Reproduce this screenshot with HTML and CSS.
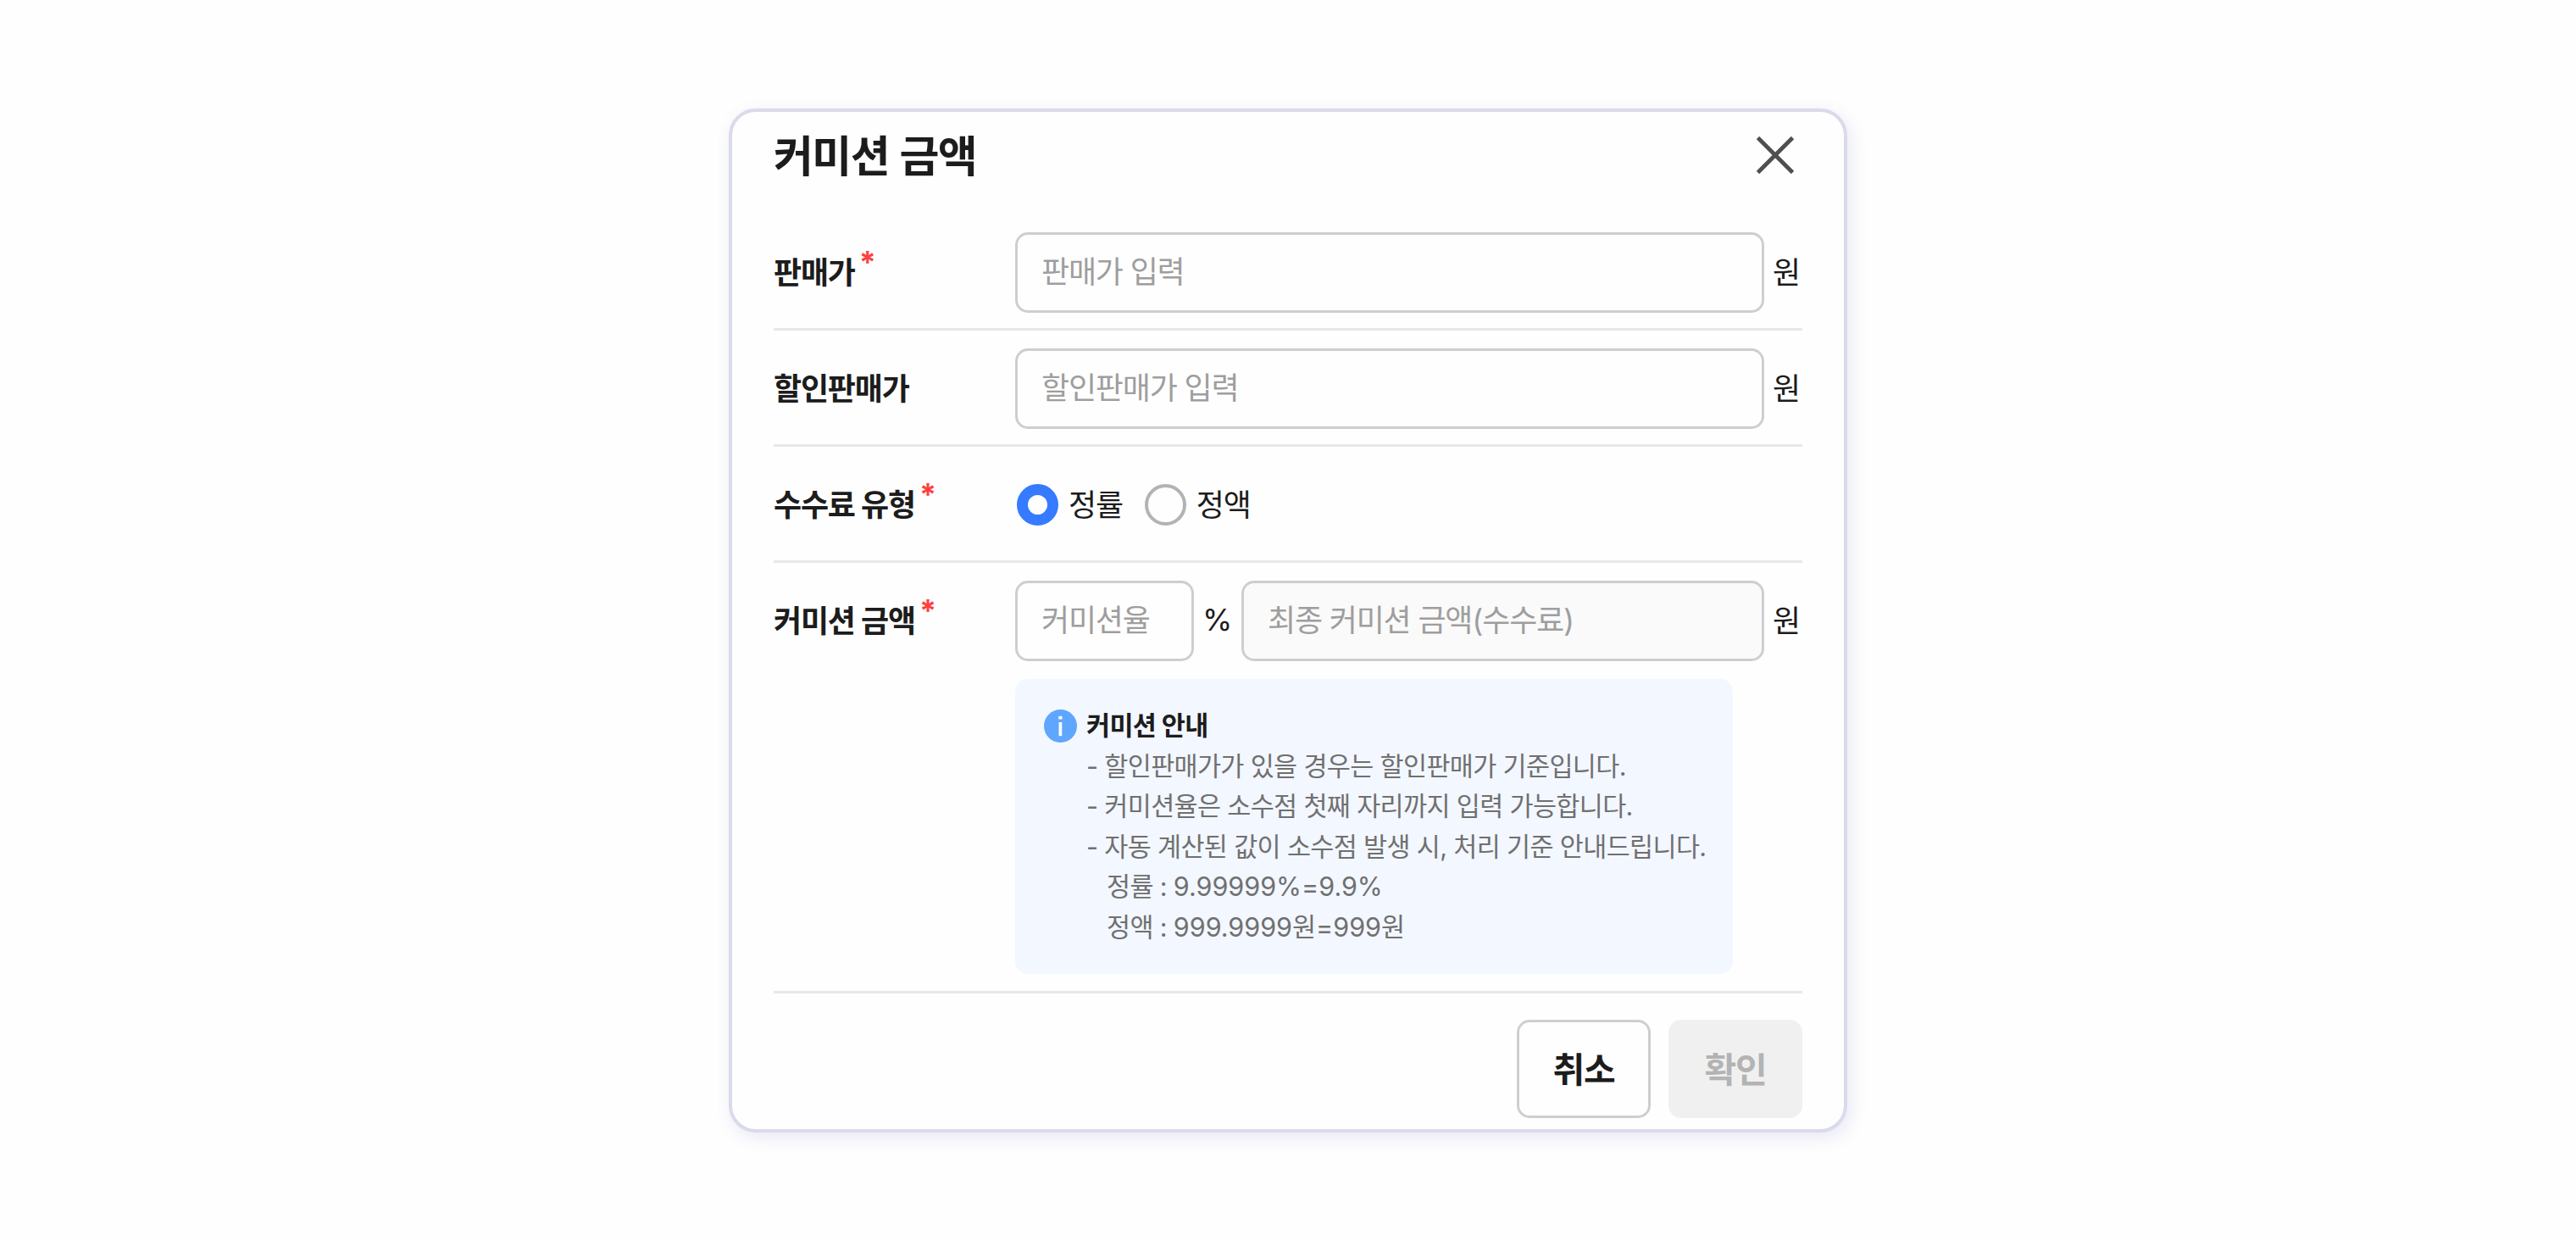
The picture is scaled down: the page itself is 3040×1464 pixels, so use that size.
FILE: index.html
```html
<!DOCTYPE html>
<html lang="ko">
<head>
    <meta charset="UTF-8">
    <meta name="viewport" content="width=device-width, initial-scale=1.0">
    <title>커미션 금액</title>
    <link rel="stylesheet" href="styles.css">
</head>
<body>
    <div class="modal">
        <div class="modal-header">
            <h2 class="modal-title">커미션 금액</h2>
            <button class="close-btn" title="닫기">
                <svg xmlns="http://www.w3.org/2000/svg" viewBox="0 0 48 48" fill="none" stroke="currentColor" stroke-width="4.8">
                    <path d="M3.5 3.5L44.5 44.5"></path>
                    <path d="M44.5 3.5L3.5 44.5"></path>
                </svg>
            </button>
        </div>

        <div class="form-row">
            <div class="label">판매가<span class="required">*</span></div>
            <div class="field">
                <input class="input" type="text" placeholder="판매가 입력">
                <span class="unit">원</span>
            </div>
        </div>

        <div class="form-row">
            <div class="label">할인판매가</div>
            <div class="field">
                <input class="input" type="text" placeholder="할인판매가 입력">
                <span class="unit">원</span>
            </div>
        </div>

        <div class="form-row">
            <div class="label">수수료 유형<span class="required">*</span></div>
            <div class="field radios">
                <label class="radio"><input type="radio" name="feeType" checked><span>정률</span></label>
                <label class="radio"><input type="radio" name="feeType"><span>정액</span></label>
            </div>
        </div>

        <div class="form-row last">
            <div class="label">커미션 금액<span class="required">*</span></div>
            <div class="field-group">
                <div class="field">
                    <input class="input rate" type="text" placeholder="커미션율">
                    <span class="percent">%</span>
                    <input class="input" type="text" placeholder="최종 커미션 금액(수수료)" disabled>
                    <span class="unit">원</span>
                </div>
                <div class="info-box">
                    <svg class="info-icon" xmlns="http://www.w3.org/2000/svg" viewBox="0 0 40 40">
                        <circle cx="20" cy="20" r="20" fill="#5ea6ff"></circle>
                        <rect x="17.8" y="8" width="4.2" height="3.8" fill="#fff"></rect>
                        <rect x="18" y="15.4" width="3.8" height="16.6" fill="#fff"></rect>
                    </svg>
                    <div class="info-text">
                        <p class="info-title">커미션 안내</p>
                        <p>- 할인판매가가 있을 경우는 할인판매가 기준입니다.</p>
                        <p>- 커미션율은 소수점 첫째 자리까지 입력 가능합니다.</p>
                        <p>- 자동 계산된 값이 소수점 발생 시, 처리 기준 안내드립니다.</p>
                        <p class="indent">정률 : <span class="num">9.99999%=9.9%</span></p>
                        <p class="indent">정액 : <span class="num">999.9999원=999원</span></p>
                    </div>
                </div>
            </div>
        </div>

        <div class="modal-footer">
            <button class="btn">취소</button>
            <button class="btn confirm" disabled>확인</button>
        </div>
    </div>
</body>
</html>
```
FILE: styles.css
```css
:root {
    --text-color: #1c1c1c;
    --sub-color: #707070;
    --placeholder-color: #9e9e9e;
    --border-color: #cecece;
    --line-color: #e7e7e7;
    --accent-color: #367bff;
    --required-color: #ff4040;
    --font-main: 'Inter', 'Noto Sans CJK KR', sans-serif;
}

* {
    margin: 0;
    padding: 0;
    box-sizing: border-box;
}

body {
    background-color: #fefefe;
    color: var(--text-color);
    font-family: var(--font-main);
    font-size: 36px;
    letter-spacing: -1.2px;
    height: 100vh;
    display: flex;
    justify-content: center;
    align-items: center;
}

button,
input {
    font-family: inherit;
    letter-spacing: inherit;
    color: inherit;
}

.modal {
    width: 1320px;
    height: 1208px;
    padding: 0 49px;
    border: 4px solid #d9daec;
    border-radius: 32px;
    background-color: #fefefe;
    box-shadow: 4px 6px 20px rgba(100, 90, 190, 0.14);
}

.modal-header {
    height: 121px;
    padding-top: 19px;
    display: flex;
    justify-content: space-between;
    align-items: flex-start;
}

.modal-title {
    font-size: 51px;
    line-height: 68px;
    font-weight: 700;
    letter-spacing: -1.6px;
    word-spacing: 2px;
}

.close-btn {
    width: 48px;
    height: 48px;
    margin: 8px 8px 0 0;
    border: none;
    background: none;
    color: #4f4f4f;
}

.close-btn svg {
    display: block;
    width: 100%;
    height: 100%;
}

.form-row {
    height: 137px;
    padding-top: 21px;
    border-bottom: 3px solid var(--line-color);
    display: flex;
}

.form-row.last {
    height: 508px;
}

.label {
    flex: none;
    width: 285px;
    height: 95px;
    padding-bottom: 5px;
    display: flex;
    align-items: center;
    font-weight: 700;
}

.required {
    margin: -20px 0 0 5px;
    font-weight: 700;
    color: var(--required-color);
}

.field {
    flex: 1;
    height: 95px;
    display: flex;
    align-items: center;
}

.field-group {
    flex: 1;
    min-width: 0;
}

.input {
    flex: 1;
    min-width: 0;
    height: 95px;
    padding: 0 28px 2px;
    border: 3px solid var(--border-color);
    border-radius: 15px;
    background-color: #fefefe;
    font-size: 36px;
}

.input::placeholder {
    color: var(--placeholder-color);
}

.input:disabled {
    background-color: #fafafa;
}

.input.rate {
    flex: 0 0 211px;
}

.unit {
    flex: none;
    width: 45px;
    padding: 0 0 5px 10px;
}

.percent {
    flex: none;
    width: 56px;
    padding: 0 0 4px 10px;
}

.radios {
    padding-left: 2px;
    gap: 26px;
}

.radio {
    display: flex;
    align-items: center;
    gap: 12px;
}

.radio span {
    padding-bottom: 5px;
}

.radio input {
    appearance: none;
    width: 49px;
    height: 49px;
    border: 4px solid #b3b3b3;
    border-radius: 50%;
    background-color: #fefefe;
}

.radio input:checked {
    border: 13px solid var(--accent-color);
}

.info-box {
    width: 847px;
    height: 348px;
    margin-top: 21px;
    padding: 31px 34px;
    border-radius: 15px;
    background-color: #f3f7ff;
    display: flex;
    gap: 11px;
}

.info-icon {
    flex: none;
    width: 39px;
    height: 39px;
    margin-top: 5px;
}

.info-text {
    color: var(--sub-color);
    font-size: 30.5px;
    line-height: 47.6px;
    letter-spacing: -0.65px;
    white-space: nowrap;
}

.info-title {
    color: var(--text-color);
    font-weight: 700;
}

.indent {
    padding-left: 24px;
}

.num {
    letter-spacing: 0;
}

.modal-footer {
    padding-top: 31px;
    display: flex;
    justify-content: flex-end;
    gap: 21px;
}

.btn {
    width: 158px;
    height: 116px;
    padding-bottom: 4px;
    border: 3px solid var(--border-color);
    border-radius: 15px;
    background-color: #fefefe;
    font-size: 41px;
    font-weight: 700;
}

.btn.confirm {
    border: none;
    background-color: #f0f0f0;
    color: #b3b3b3;
}
```
